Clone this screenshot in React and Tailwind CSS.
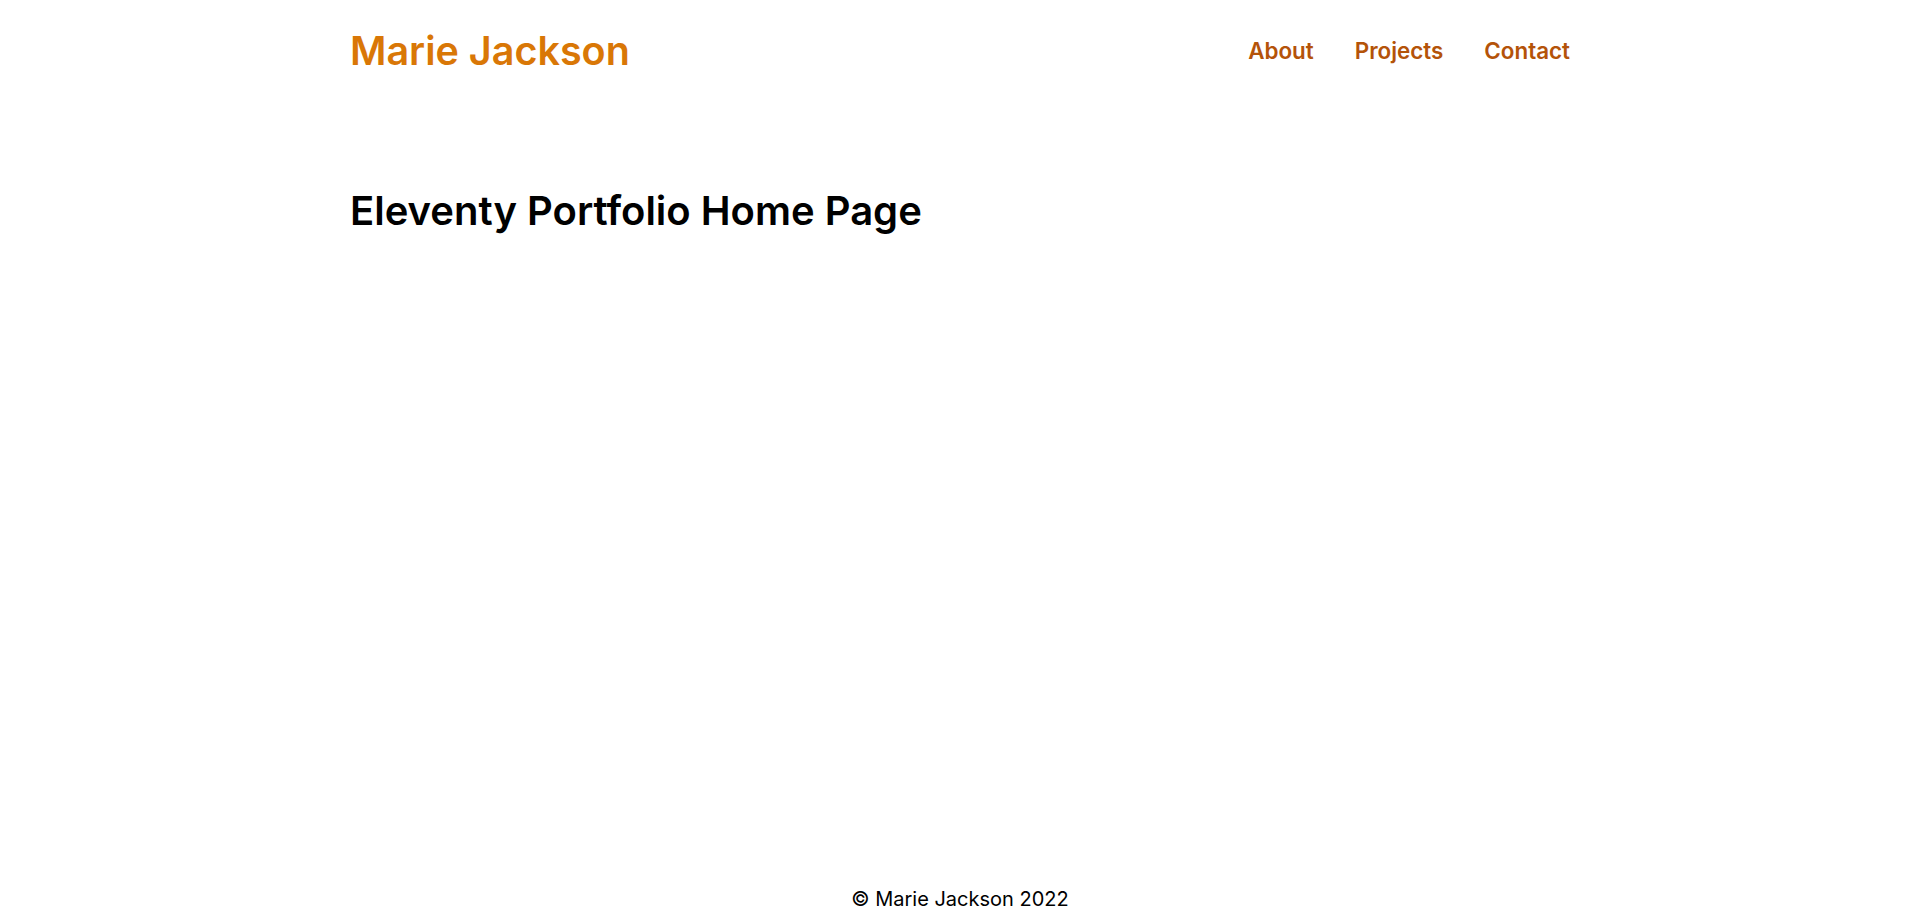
export default function App() {
  return (
    <div className="flex min-h-screen flex-col bg-white font-['Inter',sans-serif] text-black">
      <header className="mx-auto flex w-full max-w-[1220px] items-center justify-between pt-[23px]">
        <a href="#" className="text-[39.5px] font-semibold leading-[56px] text-[#d97706]">
          Marie Jackson
        </a>
        <nav className="flex items-center gap-[41px] text-[22.4px] font-semibold text-[#b45309]">
          <a href="#">About</a>
          <a href="#">Projects</a>
          <a href="#">Contact</a>
        </nav>
      </header>
      <main className="mx-auto w-full max-w-[1220px] flex-1 pt-[107px]">
        <h1 className="text-[40px] font-semibold leading-tight">Eleventy Portfolio Home Page</h1>
      </main>
      <footer className="pb-[9px] text-center text-[20px]">© Marie Jackson 2022</footer>
    </div>
  );
}
